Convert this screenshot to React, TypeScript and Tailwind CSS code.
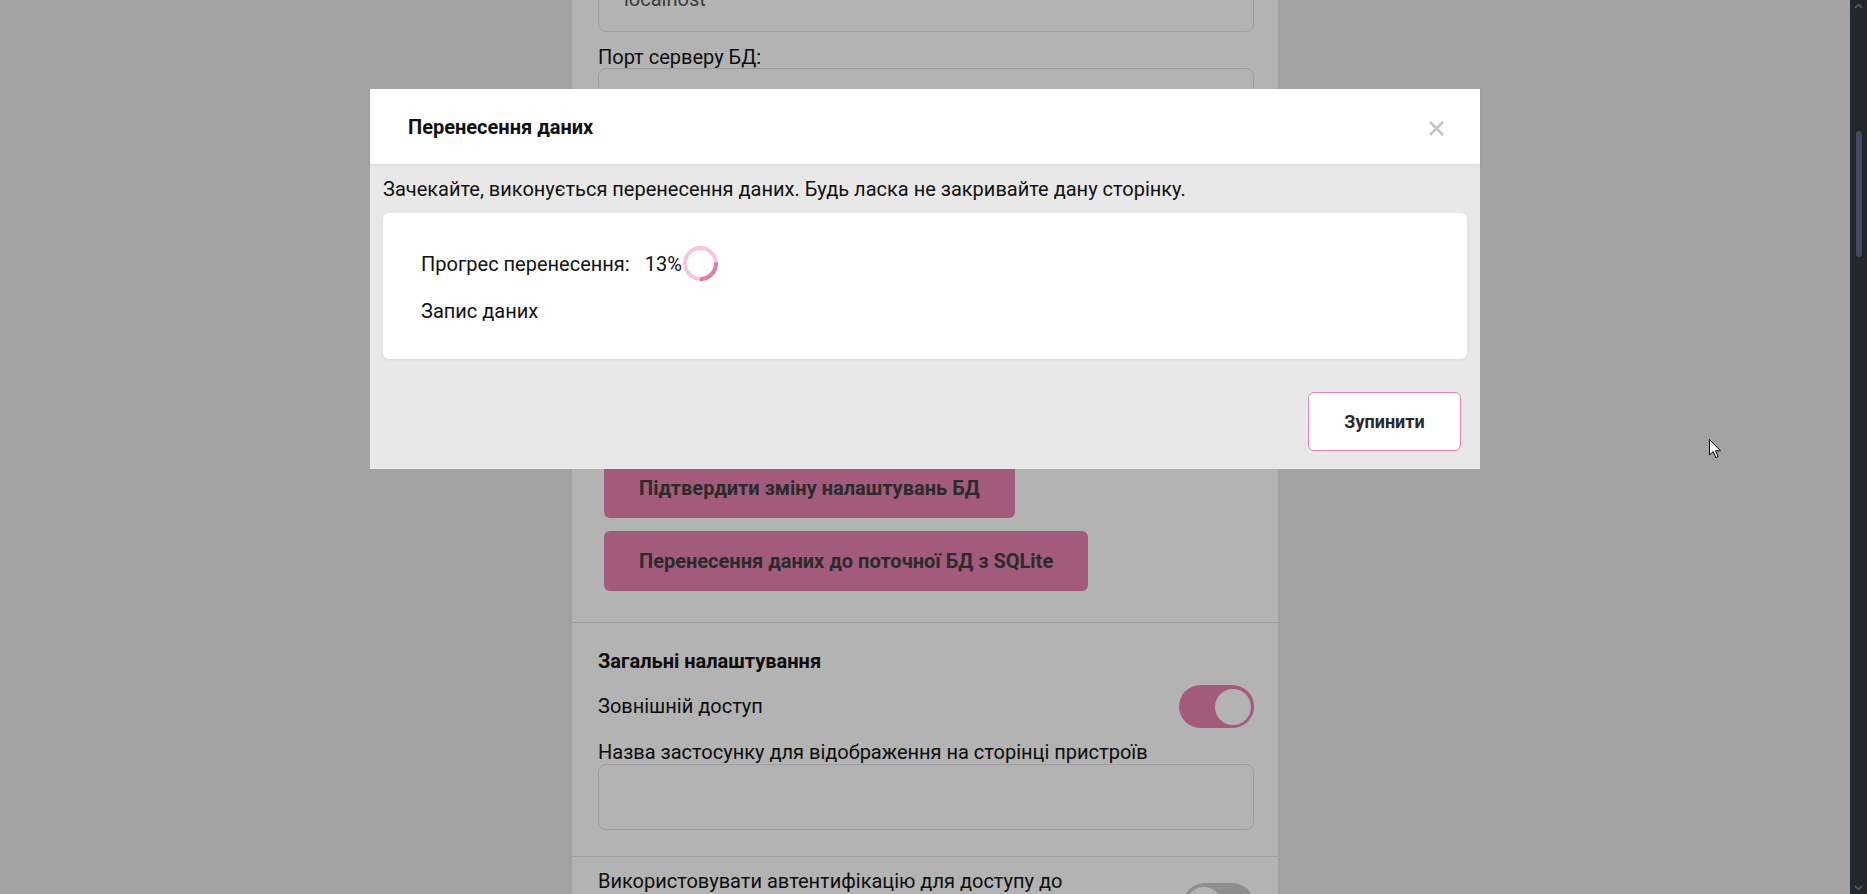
import React from 'react';

const fieldLabels = ["Ім'я користувача БД:", 'Пароль користувача БД:', 'Назва БД:'];

function Field({ label, value }: { label?: string; value?: string }) {
  return (
    <div className="flex flex-col">
      {label && <div className="mt-[15px] text-[20px] leading-[21px] text-[#0d0d0d]">{label}</div>}
      <div className="flex h-[66px] items-center rounded-[8px] border border-[#9c9ea3] px-[25px] text-[20px] text-[#3a3b3d]">
        {value}
      </div>
    </div>
  );
}

function Toggle({ on }: { on: boolean }) {
  return (
    <div
      className={
        on
          ? 'flex h-[43px] w-[75px] items-center justify-end rounded-full bg-[#a25b7c] px-[3px]'
          : 'flex h-[43px] w-[71px] items-center justify-start rounded-full bg-[#8e8e8e] px-[3px]'
      }
    >
      <div className="h-[36px] w-[36px] rounded-full bg-[#b3b3b3]" />
    </div>
  );
}

function Spinner() {
  return (
    <svg width="35" height="35" viewBox="0 0 35 35" className="ml-px">
      <circle cx="17.5" cy="17.5" r="15.5" fill="none" stroke="#f5c7de" strokeWidth="4" />
      <circle
        cx="17.5"
        cy="17.5"
        r="15.5"
        fill="none"
        stroke="#e07cae"
        strokeWidth="4"
        strokeDasharray="26 100"
        transform="rotate(-4 17.5 17.5)"
      />
    </svg>
  );
}

function SettingsPage() {
  return (
    <div className="mx-auto -mt-[34px] flex w-[706px] flex-col bg-[#b3b3b3]">
      {/* db settings */}
      <div className="flex flex-col pl-[26px] pr-[24px]">
        <Field value="localhost" />
        <Field label="Порт серверу БД:" />
        {fieldLabels.map((l) => (
          <Field key={l} label={l} />
        ))}
        <div className="mt-[18px] flex flex-col items-start gap-[13px] pl-[6px]">
          <button className="h-[60px] rounded-[6px] bg-[#a25b7c] px-[35px] text-[20px] font-bold text-[#2b2b2b]">
            Підтвердити зміну налаштувань БД
          </button>
          <button className="h-[60px] rounded-[6px] bg-[#a25b7c] px-[35px] text-[20px] font-bold text-[#2b2b2b]">
            Перенесення даних до поточної БД з SQLite
          </button>
        </div>
      </div>

      <div className="mt-[31px] h-px bg-[#9c9ea3]" />

      {/* general settings */}
      <div className="flex flex-col pl-[26px] pr-[24px] pt-[28px] pb-[26px]">
        <div className="text-[20px] font-bold leading-[21px] text-[#0d0d0d]">Загальні налаштування</div>
        <div className="mt-[13px] flex items-center justify-between">
          <span className="text-[20px] leading-[21px] text-[#0d0d0d]">Зовнішній доступ</span>
          <Toggle on />
        </div>
        <div className="mt-[14px] text-[20px] leading-[21px] text-[#0d0d0d]">
          Назва застосунку для відображення на сторінці пристроїв
        </div>
        <div className="mt-px h-[66px] rounded-[8px] border border-[#9c9ea3]" />
      </div>

      <div className="h-px bg-[#9c9ea3]" />

      <div className="flex items-start justify-between pl-[26px] pr-[24px] pt-[12px]">
        <span className="w-[480px] text-[20px] leading-[24px] text-[#0d0d0d]">
          Використовувати автентифікацію для доступу до веб-інтерфейсу
        </span>
        <div className="mt-[14px]">
          <Toggle on={false} />
        </div>
      </div>
    </div>
  );
}

function TransferModal() {
  return (
    <div className="absolute inset-0 flex items-start justify-center pt-[89px]">
      <div className="flex w-[1110px] flex-col bg-[#e8e8e8]">
        <div className="relative z-10 flex h-[75px] items-center justify-between bg-white pl-[38px] pr-[35px] shadow-[0_2px_4px_rgba(0,0,0,0.05)]">
          <h2 className="text-[20px] font-bold text-[#111]">Перенесення даних</h2>
          <svg width="17" height="17" viewBox="0 0 17 17" className="mt-[3px]">
            <path d="M2 2 15 15M15 2 2 15" stroke="#c4c4c4" strokeWidth="2.6" />
          </svg>
        </div>

        <div className="flex flex-col px-[13px] pt-[12px]">
          <p className="text-[20px] leading-[27px] text-[#111]">
            Зачекайте, виконується перенесення даних. Будь ласка не закривайте дану сторінку.
          </p>
          <div className="mt-[10px] flex h-[146px] flex-col rounded-[6px] bg-white pl-[38px] pt-[34px] shadow-[0_1px_3px_rgba(0,0,0,0.07)]">
            <div className="flex h-[33px] items-center text-[20px] text-[#111]">
              <span>Прогрес перенесення:</span>
              <span className="ml-[15px]">13%</span>
              <Spinner />
            </div>
            <div className="mt-[18px] text-[20px] leading-[27px] text-[#111]">Запис даних</div>
          </div>
        </div>

        <div className="flex justify-end pt-[33px] pr-[19px] pb-[18px]">
          <button className="h-[59px] w-[153px] rounded-[6px] border border-[#e883b6] bg-white text-[18px] font-bold text-[#2a2a2a]">
            Зупинити
          </button>
        </div>
      </div>
    </div>
  );
}

export default function App() {
  return (
    <div className="flex h-[894px] w-full overflow-hidden font-['Roboto',sans-serif]">
      <div className="relative flex-1 overflow-hidden bg-[#a2a2a2]">
        <SettingsPage />
        <TransferModal />
        {/* mouse pointer */}
        <svg width="13" height="20" viewBox="0 0 13 20" className="absolute left-[1709px] top-[439px]">
          <path d="M0.5 0.5V16L4.2 12.6 6.8 18.6 9 17.6 6.5 11.8H11.5Z" fill="#fff" stroke="#000" strokeWidth="1" />
        </svg>
      </div>
      {/* browser scrollbar */}
      <div className="flex w-[17px] flex-col items-center justify-between bg-[#23262f] py-[3px]">
        <svg width="9" height="6" viewBox="0 0 9 6">
          <path d="M1 5 4.5 1.5 8 5" fill="none" stroke="#5b6070" strokeWidth="1.5" />
        </svg>
        <div className="flex flex-1 flex-col pt-[122px]">
          <div className="h-[126px] w-[6px] rounded-full bg-[#454a63]" />
        </div>
        <svg width="9" height="6" viewBox="0 0 9 6">
          <path d="M1 1 4.5 4.5 8 1" fill="none" stroke="#5b6070" strokeWidth="1.5" />
        </svg>
      </div>
    </div>
  );
}
